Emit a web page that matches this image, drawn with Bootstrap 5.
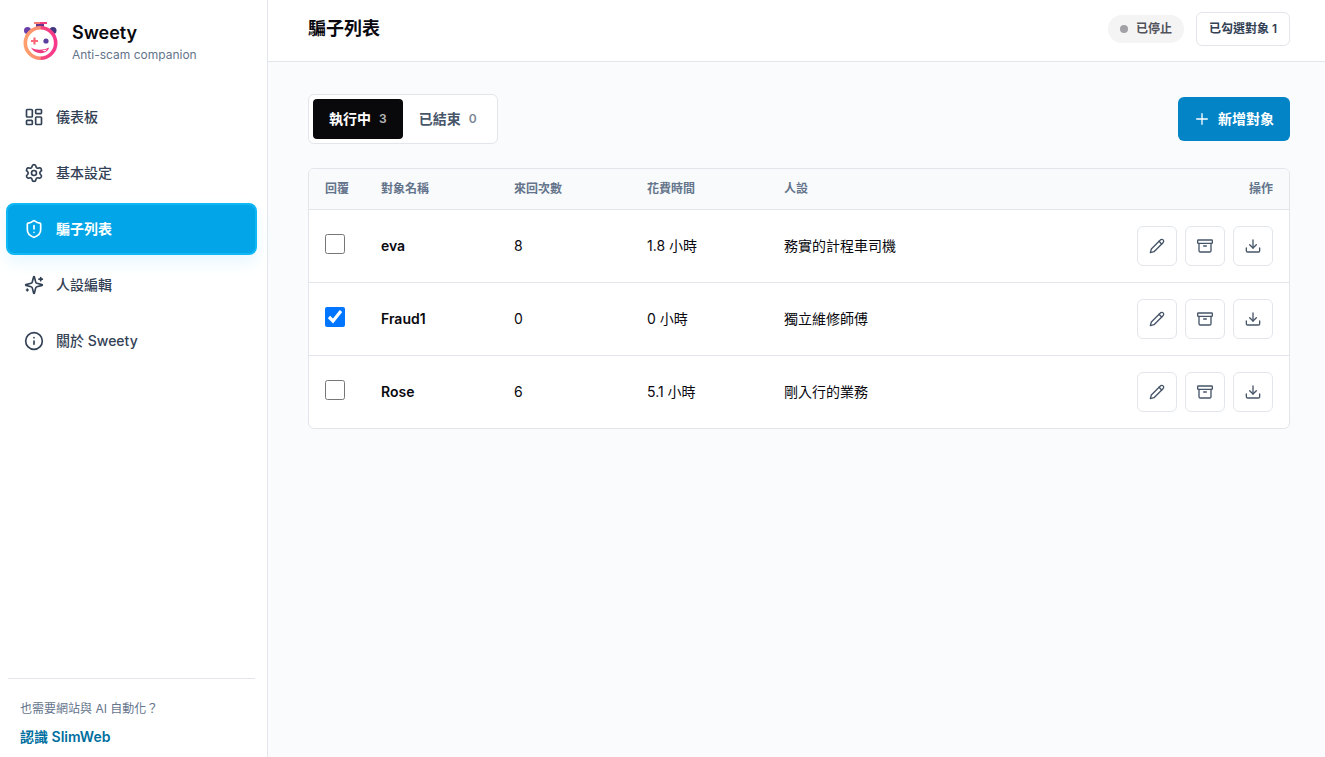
<!DOCTYPE html>
<html lang="zh-Hant">
<head>
<meta charset="utf-8">
<meta name="viewport" content="width=device-width, initial-scale=1">
<title>Sweety</title>
<link href="https://cdn.jsdelivr.net/npm/bootstrap@5.3.0/dist/css/bootstrap.min.css" rel="stylesheet">
<style>
  :root { --line: #e2e6ea; --ink: #09090f; --slate: #334155; --muted: #64748b; }
  body { font-family: Inter, "Noto Sans CJK TC", sans-serif; font-size: 14px; line-height: 20px; color: var(--ink); background: #f9fbfd; }
  .ico { width: 20px; height: 20px; flex: none; fill: none; stroke: currentColor; stroke-width: 2; stroke-linecap: round; stroke-linejoin: round; }
  .ico-sm { width: 16px; height: 16px; }
  .side { width: 268px; border-right: 1px solid var(--line); }
  .brand { padding: 20px; gap: 12px; }
  .brand-name { font-size: 18px; line-height: 26px; font-weight: 600; }
  .brand-sub { font-size: 12px; line-height: 18px; }
  .text-12 { font-size: 12px; line-height: 16px; }
  .muted { color: var(--muted); }
  .side-nav { padding: 7px 10px 0 6px; gap: 4px; }
  .side-link { height: 52px; padding: 0 18px; gap: 12px; color: var(--slate); font-weight: 500; border-radius: 8px; text-decoration: none; }
  .side-link.active { color: #fff; font-weight: 600; background: #02a6e8; border: 2px solid #10b7f5; padding: 0 16px; box-shadow: 0 8px 16px #e8f7ff; }
  .side-foot { margin: 0 12px 0 8px; padding: 22px 12px 10px; border-top: 1px solid var(--line); }
  .side-foot p { margin: 0 0 10px; }
  .side-foot a { color: #006f9f; font-weight: 600; text-decoration: none; }
  .topbar { height: 62px; padding: 0 35px 4px 40px; border-bottom: 1px solid var(--line); }
  .topbar h1 { font-size: 18px; line-height: 28px; font-weight: 600; }
  .state { height: 28px; padding: 0 12px; gap: 8px; background: #f4f4f5; color: #52525b; font-weight: 600; }
  .dot { width: 8px; height: 8px; background: #a1a1a6; }
  .picked { height: 34px; padding: 0 12px; border: 1px solid var(--line); border-radius: 6px; color: var(--slate); font-weight: 600; }
  .content { padding: 32px 35px 32px 40px; }
  .tabs { padding: 4px; border: 1px solid var(--line); border-radius: 6px; }
  .tab { height: 40px; padding: 0 16px; gap: 8px; border: 0; border-radius: 4px; background: none; color: #475569; font-weight: 600; }
  .tab.active { background: #09090b; color: #fff; }
  .tab span { font-size: 12px; opacity: .7; }
  .add { height: 44px; padding: 0 16px; gap: 8px; border: 0; border-radius: 6px; background: #0284c7; color: #fff; font-weight: 600; }
  .list { border: 1px solid var(--line); border-radius: 6px; }
  .list table { table-layout: fixed; border-collapse: separate; border-spacing: 0; }
  .list th, .list td { padding: 0 16px; vertical-align: middle; border-bottom: 1px solid var(--line); }
  .list thead th { height: 41px; background: #f8fafc; font-size: 12px; font-weight: 600; color: var(--muted); }
  .list tbody td, .list tbody th { height: 73px; }
  .list tbody tr:last-child > * { height: 72px; border-bottom: 0; }
  .list tbody th { font-weight: 600; }
  .list input { width: 20px; height: 20px; margin: 0 0 4px; display: block; }
  .c-check { width: 56px; } .c-mid { width: 133px; } .c-time { width: 137px; } .c-act { width: 200px; }
  .act { width: 40px; height: 40px; border: 1px solid var(--line); border-radius: 6px; background: #fff; color: #475569; padding: 0; }
</style>
</head>
<body>
<svg class="d-none">
  <symbol id="pencil" viewBox="0 0 24 24"><path d="M17 3a2.850 2.830 0 1 1 4 4L7.500 20.500 2 22l1.500-5.500Z"/><path d="m15 5 4 4"/></symbol>
  <symbol id="archive" viewBox="0 0 24 24"><rect width="22" height="5" x="1" y="3" rx="1"/><path d="M3 8v11a2 2 0 0 0 2 2h14a2 2 0 0 0 2-2V8"/><path d="M10 12h4"/></symbol>
  <symbol id="download" viewBox="0 0 24 24"><path d="M12 15V3"/><path d="M22 15v4a2 2 0 0 1-2 2H4a2 2 0 0 1-2-2v-4"/><path d="m7 10 5 5 5-5"/></symbol>
</svg>
<div class="d-flex min-vh-100">
  <aside class="side bg-white d-flex flex-column flex-shrink-0">
    <div class="brand d-flex">
      <svg width="40" height="40" viewBox="0 0 40 40" aria-hidden="true">
        <defs><linearGradient id="ring"><stop offset="0" stop-color="#ff9e6b"/><stop offset=".49" stop-color="#fb8b70"/><stop offset=".52" stop-color="#f5477c"/><stop offset="1" stop-color="#f8388b"/></linearGradient></defs>
        <circle cx="7.500" cy="10.500" r="3.500" fill="#6b3fa8"/><circle cx="33" cy="10.500" r="3.500" fill="#43377f"/>
        <path d="M14 2h6v2h-6z" fill="#fb7d72"/><path d="M20 2h7v2h-7z" fill="#ef3f7f"/><path d="M16 4h8v4h-8z" fill="#69358b"/>
        <circle cx="20.500" cy="23" r="15.200" fill="#fff" stroke="url(#ring)" stroke-width="3.600"/>
        <path d="M11 21h7M14.500 17.500v7" stroke="#f9687a" stroke-width="2.200"/>
        <circle cx="26" cy="21" r="2.600" fill="#5b3f9e"/>
        <path d="M11 27.500c5 3 12 3 18 0-1 7-14 8-18 0z" fill="#ee3a80"/>
        <path d="M22 30.500l5-1-2 2z" fill="#fff"/>
      </svg>
      <div><div class="brand-name">Sweety</div><div class="brand-sub muted">Anti-scam companion</div></div>
    </div>
    <nav class="side-nav d-flex flex-column">
      <a href="#" class="side-link d-flex align-items-center"><svg class="ico" viewBox="0 0 24 24"><rect width="7" height="9" x="3" y="3" rx="1"/><rect width="7" height="5" x="14" y="3" rx="1"/><rect width="7" height="9" x="14" y="12" rx="1"/><rect width="7" height="5" x="3" y="16" rx="1"/></svg>儀表板</a>
      <a href="#" class="side-link d-flex align-items-center"><svg class="ico" viewBox="0 0 24 24"><path d="M9.671 4.136a2.340 2.340 0 0 1 4.659 0 2.340 2.340 0 0 0 3.319 1.915 2.340 2.340 0 0 1 2.330 4.033 2.340 2.340 0 0 0 0 3.831 2.340 2.340 0 0 1-2.330 4.033 2.340 2.340 0 0 0-3.319 1.915 2.340 2.340 0 0 1-4.659 0 2.340 2.340 0 0 0-3.320-1.915 2.340 2.340 0 0 1-2.330-4.033 2.340 2.340 0 0 0 0-3.831A2.340 2.340 0 0 1 6.350 6.051a2.340 2.340 0 0 0 3.319-1.915"/><circle cx="12" cy="12" r="3"/></svg>基本設定</a>
      <a href="#" class="side-link active d-flex align-items-center" aria-current="page"><svg class="ico" viewBox="0 0 24 24"><path d="M20 13c0 5-3.500 7.500-7.660 8.950a1 1 0 0 1-.67-.01C7.500 20.500 4 18 4 13V6a1 1 0 0 1 1-1c2 0 4.500-1.200 6.240-2.720a1.170 1.170 0 0 1 1.520 0C14.510 3.810 17 5 19 5a1 1 0 0 1 1 1z"/><path d="M12 8v4M12 16h.01"/></svg>騙子列表</a>
      <a href="#" class="side-link d-flex align-items-center"><svg class="ico" viewBox="0 0 24 24"><path d="M9.937 15.500A2 2 0 0 0 8.500 14.063l-6.135-1.582a.5.5 0 0 1 0-.962L8.500 9.936A2 2 0 0 0 9.937 8.500l1.582-6.135a.5.5 0 0 1 .963 0L14.063 8.500A2 2 0 0 0 15.500 9.937l6.135 1.581a.5.5 0 0 1 0 .964L15.500 14.063a2 2 0 0 0-1.437 1.437l-1.582 6.135a.5.5 0 0 1-.963 0z"/><path d="M20 3v4M22 5h-4M4 17v2M5 18H3"/></svg>人設編輯</a>
      <a href="#" class="side-link d-flex align-items-center"><svg class="ico" viewBox="0 0 24 24"><circle cx="12" cy="12" r="10"/><path d="M12 16v-4M12 8h.01"/></svg>關於 Sweety</a>
    </nav>
    <div class="side-foot mt-auto">
      <p class="text-12 muted">也需要網站與 AI 自動化？</p>
      <a href="#" class="d-block">認識 SlimWeb</a>
    </div>
  </aside>
  <div class="flex-grow-1">
    <header class="topbar bg-white d-flex align-items-center justify-content-between">
      <h1 class="m-0">騙子列表</h1>
      <div class="d-flex align-items-center" style="gap:12px">
        <span class="state text-12 rounded-pill d-flex align-items-center"><span class="dot rounded-circle"></span>已停止</span>
        <span class="picked text-12 d-flex align-items-center">已勾選對象 1</span>
      </div>
    </header>
    <main class="content">
      <div class="d-flex align-items-center justify-content-between mb-4">
        <div class="tabs bg-white d-flex">
          <button type="button" class="tab active d-flex align-items-center">執行中<span>3</span></button>
          <button type="button" class="tab d-flex align-items-center">已結束<span>0</span></button>
        </div>
        <button type="button" class="add d-flex align-items-center"><svg class="ico ico-sm" viewBox="0 0 24 24"><path d="M4 12h16M12 4v16"/></svg>新增對象</button>
      </div>
      <div class="list bg-white overflow-hidden">
        <table class="w-100">
          <colgroup><col class="c-check"><col class="c-mid"><col class="c-mid"><col class="c-time"><col><col class="c-act"></colgroup>
          <thead><tr><th>回覆</th><th>對象名稱</th><th>來回次數</th><th>花費時間</th><th>人設</th><th class="text-end">操作</th></tr></thead>
          <tbody>
            <tr><td><input type="checkbox" aria-label="回覆 eva"></td><th scope="row">eva</th><td>8</td><td>1.8 小時</td><td>務實的計程車司機</td>
              <td><div class="d-flex justify-content-end gap-2"><button type="button" class="act d-flex align-items-center justify-content-center" aria-label="編輯"><svg class="ico ico-sm"><use href="#pencil"/></svg></button><button type="button" class="act d-flex align-items-center justify-content-center" aria-label="封存"><svg class="ico ico-sm"><use href="#archive"/></svg></button><button type="button" class="act d-flex align-items-center justify-content-center" aria-label="下載"><svg class="ico ico-sm"><use href="#download"/></svg></button></div></td></tr>
            <tr><td><input type="checkbox" checked aria-label="回覆 Fraud1"></td><th scope="row">Fraud1</th><td>0</td><td>0 小時</td><td>獨立維修師傅</td>
              <td><div class="d-flex justify-content-end gap-2"><button type="button" class="act d-flex align-items-center justify-content-center" aria-label="編輯"><svg class="ico ico-sm"><use href="#pencil"/></svg></button><button type="button" class="act d-flex align-items-center justify-content-center" aria-label="封存"><svg class="ico ico-sm"><use href="#archive"/></svg></button><button type="button" class="act d-flex align-items-center justify-content-center" aria-label="下載"><svg class="ico ico-sm"><use href="#download"/></svg></button></div></td></tr>
            <tr><td><input type="checkbox" aria-label="回覆 Rose"></td><th scope="row">Rose</th><td>6</td><td>5.1 小時</td><td>剛入行的業務</td>
              <td><div class="d-flex justify-content-end gap-2"><button type="button" class="act d-flex align-items-center justify-content-center" aria-label="編輯"><svg class="ico ico-sm"><use href="#pencil"/></svg></button><button type="button" class="act d-flex align-items-center justify-content-center" aria-label="封存"><svg class="ico ico-sm"><use href="#archive"/></svg></button><button type="button" class="act d-flex align-items-center justify-content-center" aria-label="下載"><svg class="ico ico-sm"><use href="#download"/></svg></button></div></td></tr>
          </tbody>
        </table>
      </div>
    </main>
  </div>
</div>
<script src="https://cdn.jsdelivr.net/npm/bootstrap@5.3.0/dist/js/bootstrap.bundle.min.js"></script>
</body>
</html>
